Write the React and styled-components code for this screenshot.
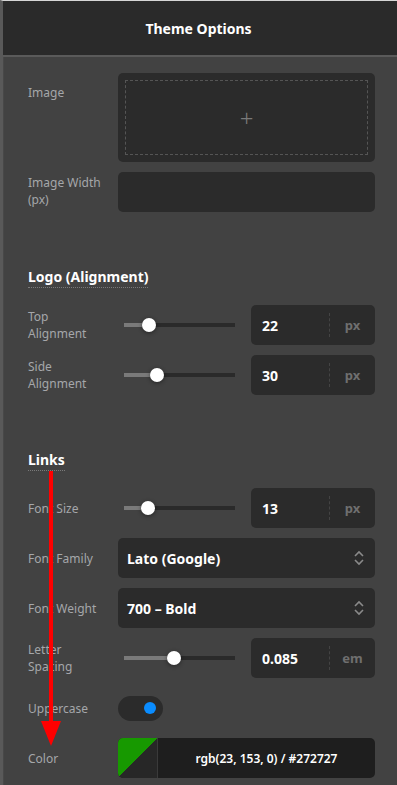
import React from "react";
import styled, { createGlobalStyle } from "styled-components";

const GlobalStyle = createGlobalStyle`
  html, body {
    margin: 0;
    padding: 0;
    background: #424242;
  }
  body {
    font-family: "Noto Sans", "Open Sans", sans-serif;
  }
  * {
    box-sizing: border-box;
  }
`;

const Panel = styled.div`
  position: relative;
  width: 397px;
  height: 785px;
  overflow: hidden;
  background: #424242;
  border-top: 1px solid #d6d6d6;
  border-left: 3px solid #595959;
  box-shadow: inset 1px 0 0 #484848;
`;

const Header = styled.div`
  height: 56px;
  display: flex;
  align-items: center;
  justify-content: center;
  background: #2a2a2a;
  border-bottom: 2px solid #5a5a5a;
  margin-left: -3px;
  color: #ffffff;
  font-weight: 700;
  font-size: 14px;
`;

const Body = styled.div`
  padding: 16px 22px 0 25px;
`;

const Section = styled.div`
  display: flex;
  flex-direction: column;
  gap: 10px;
  margin-top: ${(p) => p.$top || 0}px;
`;

const Heading = styled.div`
  align-self: flex-start;
  color: #ffffff;
  font-weight: 700;
  font-size: 14px;
  line-height: 17px;
  padding-bottom: 2px;
  border-bottom: 1px dotted #7a7a7a;
  margin-bottom: 7px;
`;

const Row = styled.div`
  display: grid;
  grid-template-columns: 90px 1fr;
  align-items: ${(p) => (p.$top ? "start" : "center")};
  min-height: ${(p) => p.$h || 40}px;
`;

const Label = styled.div`
  color: #a5a7aa;
  font-size: 12px;
  line-height: 17px;
  padding-top: ${(p) => p.$pt || 0}px;
`;

const Box = styled.div`
  height: ${(p) => p.$h || 40}px;
  background: #2b2b2b;
  border-radius: 5px;
`;

const Upload = styled(Box)`
  padding: 7px;
`;

const Dashed = styled.div`
  height: 100%;
  border: 1px dashed #555555;
  display: flex;
  align-items: center;
  justify-content: center;
  color: #7a7a7a;
  font-size: 24px;
  font-weight: 300;
`;

const SliderWrap = styled.div`
  display: flex;
  align-items: center;
  gap: 16px;
`;

const Track = styled.div`
  position: relative;
  flex: 0 0 111px;
  margin-left: 6px;
  height: 4px;
  background: #2a2a2a;
`;

const Fill = styled.div`
  height: 100%;
  background: #7a7a7a;
`;

const Knob = styled.div`
  position: absolute;
  top: 50%;
  width: 14px;
  height: 14px;
  margin: -7px 0 0 -7px;
  border-radius: 50%;
  background: #ffffff;
  box-shadow: 0 1px 4px rgba(0, 0, 0, 0.45);
`;

const NumberBox = styled(Box)`
  flex: 1;
  display: flex;
  align-items: center;
`;

const Value = styled.div`
  flex: 1;
  padding-left: 11px;
  color: #ffffff;
  font-weight: 700;
  font-size: 14px;
`;

const Unit = styled.div`
  width: 46px;
  height: 24px;
  display: flex;
  align-items: center;
  justify-content: center;
  border-left: 1px dashed #444444;
  color: #6f6f6f;
  font-weight: 700;
  font-size: 13px;
`;

const Select = styled(Box)`
  display: flex;
  align-items: center;
  justify-content: space-between;
  padding: 0 10px 0 9px;
  color: #ffffff;
  font-weight: 700;
  font-size: 14px;
`;

const Toggle = styled.div`
  width: 45px;
  height: 25px;
  border-radius: 13px;
  background: #2b2b2b;
  display: flex;
  align-items: center;
  justify-content: flex-end;
  padding-right: 7px;
  &::after {
    content: "";
    width: 12px;
    height: 12px;
    border-radius: 50%;
    background: #0a8cff;
  }
`;

const ColorField = styled.div`
  height: 40px;
  display: flex;
  border-radius: 5px;
  overflow: hidden;
  background: #1e1e1e;
`;

const Swatch = styled.div`
  width: 40px;
  border-right: 1px solid #3a3a3a;
  background: linear-gradient(to bottom right, #179900 50%, #272727 50%);
`;

const ColorText = styled.div`
  flex: 1;
  display: flex;
  align-items: center;
  justify-content: center;
  color: #ffffff;
  font-weight: 600;
  font-size: 12px;
`;

const Arrow = styled.svg`
  position: absolute;
  left: 0;
  top: 0;
  pointer-events: none;
`;

function Chevrons() {
  return (
    <svg width="12" height="16" viewBox="0 0 12 16" fill="none" stroke="#8a8a8a" strokeWidth="1.6">
      <path d="M2 6 L6 2 L10 6" />
      <path d="M2 10 L6 14 L10 10" />
    </svg>
  );
}

function Slider({ pos }) {
  return (
    <Track>
      <Fill style={{ width: pos }} />
      <Knob style={{ left: pos }} />
    </Track>
  );
}

function NumberField({ value, unit, pos }) {
  return (
    <SliderWrap>
      <Slider pos={pos} />
      <NumberBox>
        <Value>{value}</Value>
        <Unit>{unit}</Unit>
      </NumberBox>
    </SliderWrap>
  );
}

export default function App() {
  return (
    <>
      <GlobalStyle />
      <Panel>
        <Header>Theme Options</Header>
        <Body>
          <Section>
            <Row $top $h={89}>
              <Label $pt={11}>Image</Label>
              <Upload $h={89}>
                <Dashed>+</Dashed>
              </Upload>
            </Row>
            <Row $top>
              <Label $pt={2}>
                Image Width
                <br />
                (px)
              </Label>
              <Box />
            </Row>
          </Section>

          <Section $top={56}>
            <Heading>Logo (Alignment)</Heading>
            <Row>
              <Label>
                Top
                <br />
                Alignment
              </Label>
              <NumberField value="22" unit="px" pos={25} />
            </Row>
            <Row>
              <Label>
                Side
                <br />
                Alignment
              </Label>
              <NumberField value="30" unit="px" pos={33} />
            </Row>
          </Section>

          <Section $top={56}>
            <Heading>Links</Heading>
            <Row>
              <Label>Font Size</Label>
              <NumberField value="13" unit="px" pos={24} />
            </Row>
            <Row>
              <Label>Font Family</Label>
              <Select>
                Lato (Google)
                <Chevrons />
              </Select>
            </Row>
            <Row>
              <Label>Font Weight</Label>
              <Select>
                700 – Bold
                <Chevrons />
              </Select>
            </Row>
            <Row>
              <Label>
                Letter
                <br />
                Spacing
              </Label>
              <NumberField value="0.085" unit="em" pos={50} />
            </Row>
            <Row>
              <Label>Uppercase</Label>
              <Toggle />
            </Row>
            <Row>
              <Label>Color</Label>
              <ColorField>
                <Swatch />
                <ColorText>rgb(23, 153, 0) / #272727</ColorText>
              </ColorField>
            </Row>
          </Section>
        </Body>
        <Arrow width="397" height="785" viewBox="0 0 397 785">
          <line x1="48" y1="470" x2="48" y2="722" stroke="#ff0000" strokeWidth="4" />
          <polygon points="38,720 58,720 48,745" fill="#ff0000" />
        </Arrow>
      </Panel>
    </>
  );
}
